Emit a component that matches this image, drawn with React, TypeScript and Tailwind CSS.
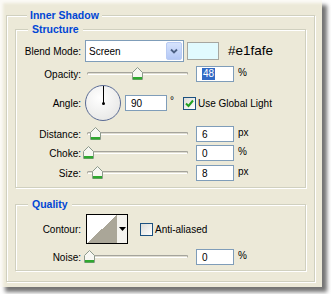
import type { ReactNode } from "react";

function Thumb({ at }: { at: number }) {
  return (
    <svg
      className="absolute top-[1px]"
      style={{ left: at - 5 }}
      width="11"
      height="13"
      viewBox="0 0 11 13"
      aria-hidden="true"
    >
      <path d="M5.5 0.5 L10.5 5.5 V12.5 H0.5 V5.5 Z" fill="#f7f7f2" stroke="#8c9a8c" />
      <rect x="1" y="10" width="9" height="2.5" fill="#2fa82f" />
    </svg>
  );
}

// thumb position is px from the slider's left edge
function Slider({ at }: { at: number }) {
  return (
    <div className="relative h-[16px] w-[105px] shrink-0">
      <div className="absolute left-[2px] right-[2px] top-[6px] h-[3px] rounded-full border border-[#a5a49c] border-b-white bg-[#dedcd0]" />
      <Thumb at={at} />
    </div>
  );
}

function Field({ value, w = "w-[38px]", selected = false }: { value: string; w?: string; selected?: boolean }) {
  return (
    <div className={`flex h-[16px] ${w} shrink-0 items-center border border-[#7f9db9] bg-white pl-[5px]`}>
      {selected ? <span className="bg-[#316ac5] px-[1px] leading-[12px] text-white">{value}</span> : value}
    </div>
  );
}

function Label({ children }: { children: ReactNode }) {
  return <span className="w-[65px] shrink-0 text-right">{children}</span>;
}

function Check({ checked = false }: { checked?: boolean }) {
  return (
    <div className="flex h-[13px] w-[13px] shrink-0 items-center justify-center border border-[#1c5180] bg-[linear-gradient(135deg,#dcdcd7,#ffffff)]">
      {checked && (
        <svg width="9" height="9" viewBox="0 0 9 9" aria-hidden="true">
          <path d="M1 4.5 L3.5 7 L8 1.5" fill="none" stroke="#21a121" strokeWidth="2" />
        </svg>
      )}
    </div>
  );
}

function SliderRow({ label, at, value, unit, className }: { label: string; at: number; value: string; unit: string; className: string }) {
  return (
    <div className={`flex h-[16px] items-center ${className}`}>
      <Label>{label}</Label>
      <div className="ml-[4px]">
        <Slider at={at} />
      </div>
      <div className="ml-[6px]">
        <Field value={value} />
      </div>
      <span className="ml-[4px] -mt-[3px]">{unit}</span>
    </div>
  );
}

const groupBox =
  "border border-[#d0d0bf] shadow-[inset_1px_1px_0_#fff,1px_1px_0_#fff]";
const legendCls =
  "bg-[#ece9d8] text-[10.5px] font-bold leading-[13px] text-[#0046d5]";

export default function App() {
  return (
    <div className="h-[294px] w-[331px] bg-white font-['Liberation_Sans',Arial,sans-serif] text-[10px] text-black">
      <div className="h-[287px] w-[322px] bg-[#ece9d8] pl-[6px] pt-[9px] shadow-[inset_3px_3px_3px_#fbfaf6,5px_5px_4px_rgba(0,0,0,0.55)]">
        <fieldset className={`w-[309px] px-[8px] pb-[10px] ${groupBox}`}>
          <legend className={`ml-[12px] px-[3px] ${legendCls}`}>Inner Shadow</legend>

          <fieldset className={`mt-[1px] w-[291px] pb-[6px] pt-[4px] ${groupBox}`}>
            <legend className={`ml-[12px] px-[4px] ${legendCls}`}>Structure</legend>

            <div className="flex h-[22px] items-center">
              <Label>Blend Mode:</Label>
              <div className="ml-[4px] flex h-[22px] w-[99px] shrink-0 items-center border border-[#7f9db9] bg-white p-[1px]">
                <span className="flex-1 pl-[2px]">Screen</span>
                <div className="flex h-full w-[16px] items-center justify-center rounded-[2px] border border-[#b9cbf3] bg-[linear-gradient(#d6e3fd,#b4c8f6)]">
                  <svg width="8" height="6" viewBox="0 0 8 6" aria-hidden="true">
                    <path d="M1 1.5 L4 4.5 L7 1.5" fill="none" stroke="#4d6185" strokeWidth="1.8" />
                  </svg>
                </div>
              </div>
              <div className="ml-[3px] h-[18px] w-[32px] shrink-0 border border-[#a6a6a0] bg-[#e1fafe]" />
              <span className="ml-[9px] text-[13.5px]">#e1fafe</span>
            </div>

            <div className="mt-[4px] flex h-[16px] items-center">
              <Label>Opacity:</Label>
              <div className="ml-[4px]">
                <Slider at={52} />
              </div>
              <div className="ml-[6px]">
                <Field value="48" selected />
              </div>
              <span className="ml-[4px] -mt-[3px]">%</span>
            </div>

            <div className="mt-[3px] flex h-[36px] items-center">
              <Label>Angle:</Label>
              <div className="relative ml-[4px] h-[36px] w-[36px] shrink-0 rounded-full border-[1.5px] border-[#5b6c95] bg-[radial-gradient(circle_at_40%_35%,#ffffff,#e2e2e0)]">
                <div className="absolute left-[16.5px] top-0 h-[17px] w-px bg-black" />
                <div className="absolute left-[15.5px] top-[15.5px] h-[3px] w-[3px] rounded-full bg-black" />
              </div>
              <div className="ml-[4px]">
                <Field value="90" w="w-[42px]" />
              </div>
              <span className="ml-[3px] -mt-[6px]">°</span>
              <div className="ml-[9px]">
                <Check checked />
              </div>
              <span className="ml-[2px]">Use Global Light</span>
            </div>

            <SliderRow className="mt-[5px]" label="Distance:" at={10} value="6" unit="px" />
            <SliderRow className="mt-[3px]" label="Choke:" at={3} value="0" unit="%" />
            <SliderRow className="mt-[4px]" label="Size:" at={12} value="8" unit="px" />
          </fieldset>

          <fieldset className={`mt-[10px] w-[291px] pb-[5px] pt-[3px] ${groupBox}`}>
            <legend className={`ml-[12px] px-[4px] ${legendCls}`}>Quality</legend>

            <div className="flex h-[30px] items-center">
              <Label>Contour:</Label>
              <div className="ml-[5px] flex h-[30px] w-[42px] shrink-0 border border-black bg-[#f4f3ee]">
                <div className="h-full w-[30px] bg-[linear-gradient(to_bottom_right,#ffffff_50%,#aaa698_50%)]" />
                <div className="flex flex-1 items-center justify-center">
                  <svg width="7" height="4" viewBox="0 0 7 4" aria-hidden="true">
                    <path d="M0 0 H7 L3.5 4 Z" fill="#000" />
                  </svg>
                </div>
              </div>
              <div className="ml-[12px]">
                <Check />
              </div>
              <span className="ml-[2px]">Anti-aliased</span>
            </div>

            <SliderRow className="mt-[5px]" label="Noise:" at={4} value="0" unit="%" />
          </fieldset>
        </fieldset>
      </div>
    </div>
  );
}
